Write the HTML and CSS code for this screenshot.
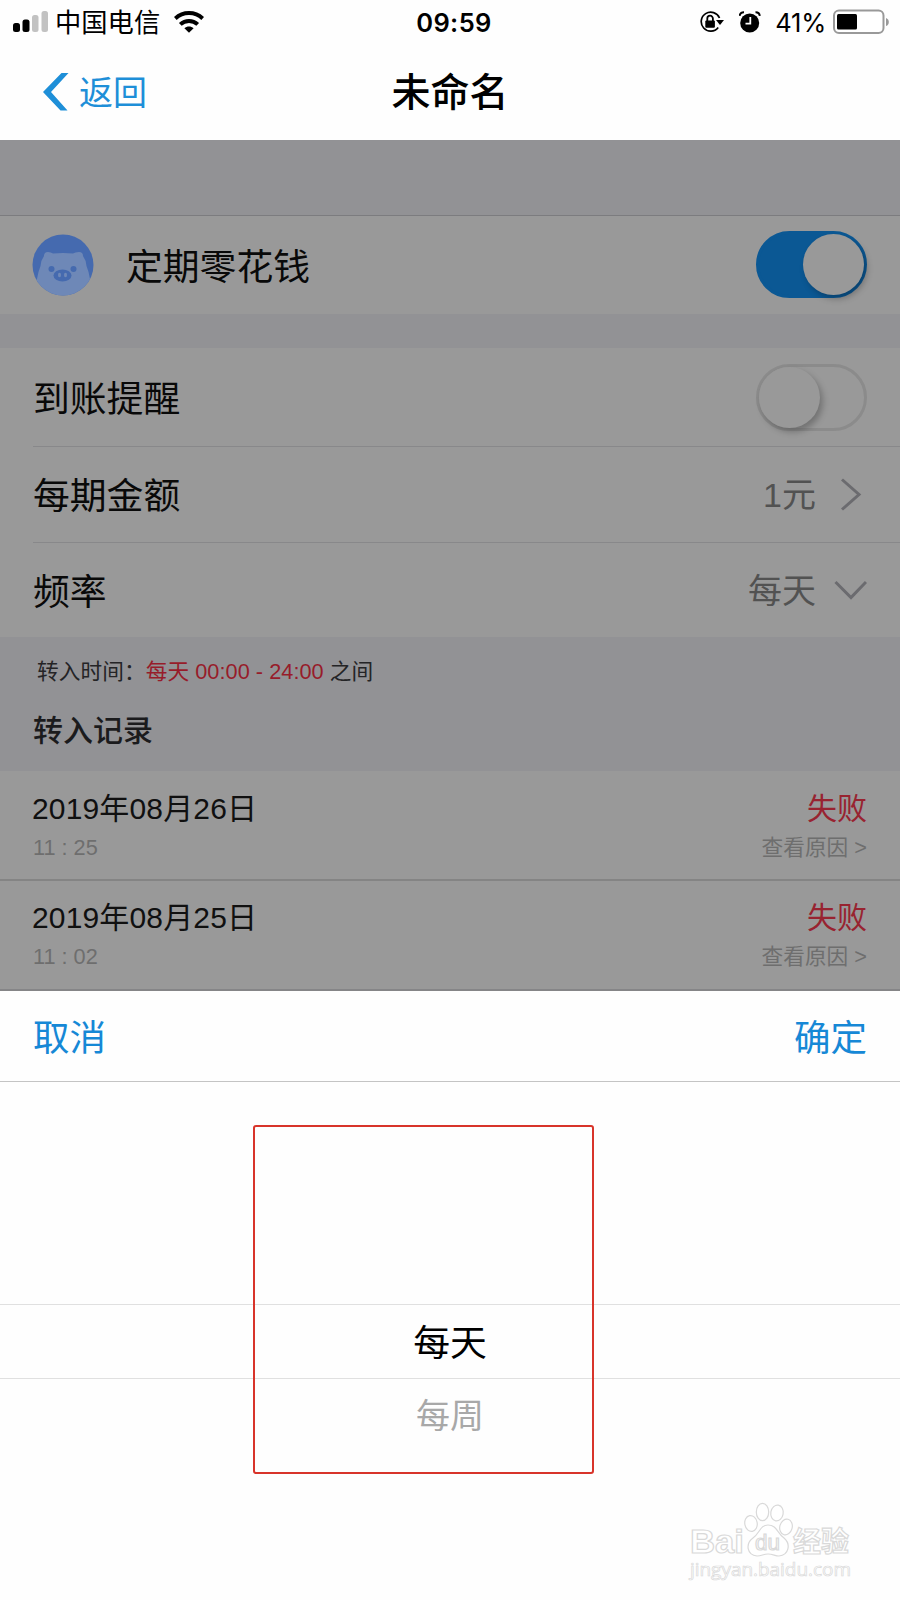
FILE: index.html
```html
<!DOCTYPE html>
<html lang="zh-CN">
<head>
<meta charset="utf-8">
<title>未命名</title>
<link rel="stylesheet" href="styles.css">
</head>
<body>
<div class="screen">
  <header class="header">
    <div class="status">
      <div class="status-left">
        <svg class="signal" width="36" height="24" viewBox="0 0 36 24"><rect x="0" y="13" width="7" height="9" rx="2.500" fill="#000"/><rect x="9.500" y="9.500" width="7" height="12.500" rx="2.500" fill="#000"/><rect x="19" y="5" width="6.500" height="17" rx="2.500" fill="#c2c2c2"/><rect x="28.500" y="1" width="6.500" height="21" rx="2.500" fill="#c2c2c2"/></svg>
        <span class="carrier">中国电信</span>
        <svg class="wifi" width="30" height="22" viewBox="0 0 30 22"><g fill="none" stroke="#000" stroke-width="4"><path d="M1.300 7.500C9 .3 21 .3 28.700 7.500"/><path d="M6.300 13.400C11.300 8.700 18.700 8.700 23.700 13.400"/></g><path d="M10.400 17.300C13 15 17 15 19.600 17.300L15 21.800Z"/></svg>
      </div>
      <div class="time">09:59</div>
      <div class="status-right">
        <svg class="lock" width="25" height="22" viewBox="0 0 25 22"><path d="M20.500 7A9.500 9.500 0 1 0 19.200 16.500" fill="none" stroke="#000" stroke-width="1.700"/><path d="M17 9H25L21 14Z"/><rect x="6.300" y="9.500" width="9.600" height="7.200" rx="1"/><path d="M8.300 10V7.500a2.800 2.800 0 0 1 5.600 0V10" fill="none" stroke="#000" stroke-width="1.800"/></svg>
        <svg class="alarm" width="22" height="22" viewBox="0 0 22 22"><circle cx="10.700" cy="12" r="9.500"/><path d="M.6 4.800Q1.200 1.200 5 1.300M16.500 1.300Q20.300 1.200 20.800 4.800" fill="none" stroke="#000" stroke-width="2"/><path d="M11.300 6V12.700H6.500" fill="none" stroke="#fff" stroke-width="1.800"/></svg>
        <span class="percent">41%</span>
        <svg class="battery" width="57" height="26" viewBox="0 0 57 26"><rect x="1" y="1.500" width="49.500" height="22.500" rx="5" fill="#fff" stroke="#999" stroke-width="2"/><rect x="4" y="5" width="20" height="15.500" rx="1.500"/><path d="M53 9Q55.800 10 55.800 13T53 17Z" fill="#999"/></svg>
      </div>
    </div>
    <nav class="nav">
      <a class="back"><svg width="26" height="38" viewBox="0 0 26 38"><path d="M18.500 0H25.500L8 19L24.500 37.500H17.500L0 19Z" fill="#1e8fd8"/></svg><span>返回</span></a>
      <h1 class="title">未命名</h1>
    </nav>
  </header>

  <main class="content">
    <section class="row plan">
      <svg class="pig" width="62" height="62" viewBox="0 0 62 62"><defs><clipPath id="disc"><circle cx="31" cy="31" r="30.500"/></clipPath></defs><g clip-path="url(#disc)"><rect width="62" height="62" fill="#456aaf"/><path d="M12 22Q12 18 16 18Q19 18 21 19.500Q31 18.500 41 19.500Q43 18 47 18Q51 18 51 22Q54 26 54.500 32Q57 38 58 45L62 52V62H0V52L5 45Q6 38 8.500 32Q9 26 12 22Z" fill="#6e88b7"/></g><g fill="#456aaf"><circle cx="19.500" cy="35" r="3"/><circle cx="41.500" cy="35" r="3"/><ellipse cx="30.500" cy="41.500" rx="9" ry="6"/></g><g fill="#6e88b7"><ellipse cx="27.500" cy="41" rx="1.500" ry="2.200"/><ellipse cx="33.500" cy="41" rx="1.500" ry="2.200"/></g></svg>
      <span class="label">定期零花钱</span>
      <span class="switch on"><i class="knob"></i></span>
    </section>

    <section class="settings">
      <div class="row"><span class="label">到账提醒</span><span class="switch"><i class="knob"></i></span></div>
      <div class="row"><span class="label">每期金额</span><span class="value">1元</span><svg class="chevron" width="34" height="34" viewBox="0 0 34 34"><path d="M9 1.500L26 16.500L9 31.500" fill="none" stroke="#6b6b6f" stroke-width="3"/></svg></div>
      <div class="row"><span class="label">频率</span><span class="value">每天</span><svg class="chevron" width="34" height="34" viewBox="0 0 34 34"><path d="M2.500 8L18 23.500L33 8" fill="none" stroke="#6b6b6f" stroke-width="3"/></svg></div>
    </section>

    <section class="heading">
      <p class="notice">转入时间：<em>每天 00:00 - 24:00</em> 之间</p>
      <h2 class="subtitle">转入记录</h2>
    </section>

    <section class="records">
      <div class="record"><div><p class="date">2019年08月26日</p><p class="hour">11 : 25</p></div><div class="result"><p class="failed">失败</p><p class="reason">查看原因 &gt;</p></div></div>
      <div class="record"><div><p class="date">2019年08月25日</p><p class="hour">11 : 02</p></div><div class="result"><p class="failed">失败</p><p class="reason">查看原因 &gt;</p></div></div>
    </section>
  </main>

  <section class="sheet">
    <div class="toolbar"><a>取消</a><a>确定</a></div>
    <div class="picker">
      <div class="option selected">每天</div>
      <div class="option next">每周</div>
    </div>
    <div class="highlight"></div>
    <svg class="watermark" width="170" height="80" viewBox="0 0 170 80">
      <g fill="#fff" stroke="#d9d9d9" stroke-width="1.200">
        <text x="0" y="52" class="brand" textLength="54" lengthAdjust="spacingAndGlyphs">Bai</text>
        <ellipse cx="72.500" cy="11" rx="6.200" ry="8.700"/>
        <ellipse cx="87" cy="12" rx="6.200" ry="8" transform="rotate(10 87 12)"/>
        <ellipse cx="61" cy="22.500" rx="6.200" ry="8" transform="rotate(-10 61 22.500)"/>
        <ellipse cx="96" cy="26" rx="6.200" ry="8" transform="rotate(15 96 26)"/>
        <path d="M78 24C70 24 70 32 63 37C55 43 57 54 67 55C72 55 73 53 78 53S85 55 89 55C99 54 101 43 94 37C87 32 87 24 78 24Z"/>
        <text x="65" y="49" class="du" textLength="25" lengthAdjust="spacingAndGlyphs">du</text>
        <text x="103" y="51" class="brand-cn" textLength="56">经验</text>
        <text x="0" y="75" class="domain" textLength="161">jingyan.baidu.com</text>
      </g>
    </svg>
  </section>
</div>
</body>
</html>
```
FILE: styles.css
```css
* { box-sizing: border-box; margin: 0; padding: 0; }

body {
  background: #fefefe;
  color: #090909;
  font-family: "Liberation Sans", "Noto Sans CJK SC", sans-serif;
}

.screen {
  width: 900px;
  height: 1600px;
  overflow: hidden;
  display: flex;
  flex-direction: column;
}

svg { display: block; flex: none; }

/* status bar and navigation */
.header { height: 140px; background: #fefefe; }

.status {
  height: 46px;
  display: grid;
  grid-template-columns: 1fr auto 1fr;
  align-items: center;
  padding: 0 10px 0 13px;
  color: #000;
}

.status-left, .status-right { display: flex; align-items: center; }
.status-right { justify-content: flex-end; }
.signal { margin-top: -2px; }
.carrier { font-size: 26.300px; margin-left: 6px; line-height: 46px; }
.wifi { margin-left: 14px; margin-top: -3px; }
.time { font: 600 25.500px/46px Inter, sans-serif; letter-spacing: .4px; padding-left: 5px; margin-top: -1px; }
.lock { margin-top: -2px; }
.alarm { margin-left: 15px; margin-top: -3px; }
.percent { font: 400 25.500px/46px Inter, sans-serif; margin-left: 14px; letter-spacing: -.2px; }
.battery { margin-left: 7px; margin-top: -3px; }

.nav {
  height: 94px;
  display: grid;
  grid-template-columns: 1fr auto 1fr;
  align-items: center;
  padding: 0 43px 4px;
}
.back { display: flex; align-items: center; gap: 10px; color: #1e8fd8; font-size: 34px; line-height: 50px; }
.back span { padding-top: 4px; }
.back svg { margin-top: 2px; }
.title { font-size: 39px; font-weight: 500; line-height: 50px; color: #000; padding-top: 4px; }

/* dimmed page */
.content { background: #929295; height: 851px; padding-top: 75px; border-bottom: 2px solid #858587; }

.row { display: flex; align-items: center; height: 95px; padding-right: 33px; }
.label { font-size: 36.800px; line-height: 56px; padding-top: 6px; flex: 1; }
.plan { height: 99px; padding-left: 32px; background: #999; border-top: 1px solid #7c7c7f; }
.plan .label { padding-left: 32px; }
.plan .switch { margin-top: -1px; }

.settings { margin-top: 34px; padding-left: 33px; background: #999; height: 289px; }
.settings .row:first-child { height: 98px; }
.settings .row + .row { height: 96px; border-top: 1px solid #88888a; }
.settings .row + .row .label { padding-top: 4px; }

.switch {
  width: 111px;
  height: 67px;
  border-radius: 34px;
  border: 3px solid #8b8b8b;
  display: flex;
}
.switch.on { background: #0b5894; border-color: #0b5894; justify-content: flex-end; }
.knob { width: 61px; height: 61px; border-radius: 50%; background: #999; box-shadow: 3px 4px 6px rgba(0, 0, 0, .25); }

.value { font-size: 34px; line-height: 50px; color: #525252; }
.chevron { margin-left: 17px; }

.heading { height: 134px; padding: 19px 33px 0; }
.notice { font-size: 21.700px; line-height: 32px; padding-left: 4px; color: #242426; letter-spacing: .05px; }
.notice em { font-style: normal; color: #971c2a; }
.subtitle { font-size: 30px; font-weight: 500; line-height: 44px; margin-top: 21px; color: #1b1b1d; }

.records { background: #999; }
.record { display: flex; justify-content: space-between; height: 109px; padding: 16px 33px 0 32px; }
.record + .record { border-top: 2px solid #848484; padding-top: 15px; margin-top: -1px; height: 110px; }
.date, .failed { font-size: 30px; line-height: 44px; }
.date { color: #101010; letter-spacing: .15px; }
.failed { color: #982330; }
.hour, .reason { font-size: 21.700px; line-height: 34px; color: #6e6e6e; }
.hour { padding-left: 1px; }
.result { text-align: right; }

/* bottom sheet */
.sheet { position: relative; flex: 1; background: #fefefe; }
.toolbar {
  display: flex;
  justify-content: space-between;
  height: 91px;
  padding: 20px 33px 0;
  border-bottom: 1px solid #c4c4c4;
  color: #1688d6;
  font-size: 36.500px;
  line-height: 56px;
}
.picker { padding-top: 222px; }
.option { text-align: center; line-height: 74px; }
.selected { height: 75px; border: 1px solid #e0e0e0; border-width: 1px 0; font-size: 36.800px; line-height: 78px; color: #000; }
.next { font-size: 34px; line-height: 75px; color: #a8a8a8; }

.highlight {
  position: absolute;
  left: 253px;
  top: 134px;
  width: 341px;
  height: 349px;
  border: 2px solid #d8342a;
  border-radius: 3px;
}

.watermark { position: absolute; left: 690px; top: 510px; overflow: visible; }
.brand { font: 700 34px "Liberation Sans", sans-serif; }
.du { font: 400 22px "Liberation Sans", sans-serif; }
.brand-cn { font: 700 28px "Noto Sans CJK SC", sans-serif; }
.domain { font: 400 19px "Open Sans", sans-serif; stroke-width: .7px; }
```
